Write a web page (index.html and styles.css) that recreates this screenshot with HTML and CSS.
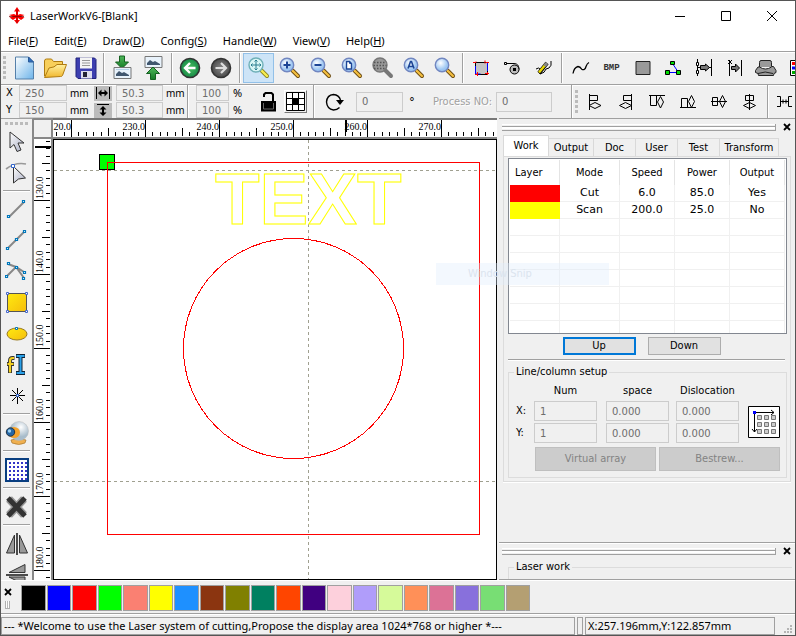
FILE: index.html
```html
<!DOCTYPE html>
<html lang="en">
<head>
<meta charset="utf-8">
<title>LaserWorkV6-[Blank]</title>
<link rel="stylesheet" href="styles.css">
</head>
<body>
<svg class="defs" width="0" height="0" aria-hidden="true">
  <defs>
    <linearGradient id="page" x1="0" y1="0" x2="1" y2="1"><stop offset="0" stop-color="#fff"/><stop offset="1" stop-color="#6db4ea"/></linearGradient>
    <linearGradient id="folder" x1="0" y1="0" x2="0" y2="1"><stop offset="0" stop-color="#fff0a0"/><stop offset="1" stop-color="#f0b62c"/></linearGradient>
    <linearGradient id="green" x1="0" y1="0" x2="0" y2="1"><stop offset="0" stop-color="#4fb85a"/><stop offset="1" stop-color="#157a26"/></linearGradient>
    <radialGradient id="greenball"><stop offset="0" stop-color="#4cc060"/><stop offset="1" stop-color="#178a48"/></radialGradient>
    <radialGradient id="greyball"><stop offset="0" stop-color="#888"/><stop offset="1" stop-color="#4a4a4a"/></radialGradient>
    <radialGradient id="glass" cx=".4" cy=".35"><stop offset="0" stop-color="#fff"/><stop offset="1" stop-color="#9cc6f2"/></radialGradient>
    <linearGradient id="gold" x1="0" y1="0" x2="1" y2="1"><stop offset="0" stop-color="#ffea10"/><stop offset="1" stop-color="#f5bd0c"/></linearGradient>
    <linearGradient id="cursor" x1="0" y1="0" x2="1" y2="1"><stop offset="0" stop-color="#fff"/><stop offset="1" stop-color="#a9aec4"/></linearGradient>
    <radialGradient id="globe" cx=".6" cy=".3"><stop offset="0" stop-color="#fff"/><stop offset="1" stop-color="#a8bccb"/></radialGradient>
    <symbol id="lens" viewBox="0 0 24 24">
      <path d="M14.500 14.500 20 20" stroke="#6a4a10" stroke-width="4" stroke-linecap="round"/>
      <path d="M14.500 14.500 20 20" stroke="#f5c040" stroke-width="2.200" stroke-linecap="round"/>
      <circle cx="9" cy="9" r="6.700" fill="url(#glass)" stroke="#7186c0" stroke-width="1.400"/>
    </symbol>
    <pattern id="ticks-x" x="18" y="0" width="74" height="17" patternUnits="userSpaceOnUse">
      <path d="M.5 0v17M37.500 8v8M7.500 12v4M15.500 12v4M22.500 12v4M30.500 12v4M44.500 12v4M52.500 12v4M59.500 12v4M67.500 12v4" stroke="#000"/>
    </pattern>
    <pattern id="ticks-y" x="0" y="61" width="17" height="74" patternUnits="userSpaceOnUse">
      <path d="M0 .5h16M8 37.500h8M12 7.500h4M12 15.500h4M12 22.500h4M12 30.500h4M12 44.500h4M12 52.500h4M12 59.500h4M12 67.500h4" stroke="#000"/>
    </pattern>
  </defs>
</svg>
<div class="window">
  <header class="titlebar">
    <svg class="logo" width="18" height="18" viewBox="0 0 18 18"><path d="M9 0 12 4.500H10V8l2-1 4.500 1-3.500 1.500 3.500 1L13 13l-3-2v2h2l-3 4-3-4h2v-2l-3 2-3.500-2.500L5 9.500 1 8l5-1 2 1V4.500H6z" fill="#f00"/><path d="M1 9.500h15" stroke="#600" stroke-width=".7"/><path d="M9 2v14" stroke="#900" stroke-width=".7"/></svg>
    <span class="title">LaserWorkV6-[Blank]</span>
    <button class="winbtn" aria-label="Minimize"><svg width="10" height="10"><path d="M0 5.500h10" stroke="#000"/></svg></button>
    <button class="winbtn" aria-label="Maximize"><svg width="10" height="10"><path d="M.5 .5h9v9h-9z" fill="none" stroke="#000"/></svg></button>
    <button class="winbtn" aria-label="Close"><svg width="10" height="10"><path d="M0 0 10 10M10 0 0 10" stroke="#000"/></svg></button>
  </header>
  <nav class="menu">
    <a href="#">File(<u>F</u>)</a><a href="#">Edit(<u>E</u>)</a><a href="#">Draw(<u>D</u>)</a><a href="#">Config(<u>S</u>)</a><a href="#">Handle(<u>W</u>)</a><a href="#">View(<u>V</u>)</a><a href="#">Help(<u>H</u>)</a>
  </nav>

  <div class="toolbar main-tools">
    <i class="grip"></i>
    <button aria-label="New"><svg width="24" height="24"><path d="M3.500 1h13l5 5v17h-18z" fill="url(#page)" stroke="#5580aa"/><path d="M16.500 1v5h5z" fill="#2f6fc0" stroke="#2a5a98"/></svg></button>
    <button aria-label="Open"><svg width="24" height="24"><path d="M1.500 20V5q0-2 2-2h5l2 2.500h9v3" fill="#f8cf5a" stroke="#b07c10"/><path d="M1.500 21.500 6 12q6-.5 8-3.500h9.500l-4 11q-.5 1-2 1z" fill="url(#folder)" stroke="#b07c10"/></svg></button>
    <button aria-label="Save"><svg width="24" height="24"><path d="M2 2h18.500l1.500 1.500v19H4l-2-2z" fill="#3d3fb0" stroke="#23247c"/><path d="M6 1.500h12v11H6z" fill="#f4f4f4"/><path d="M8 4.500h8M8 7h8M8 9.500h8" stroke="#999"/><path d="M7 15h11v7.500H7z" fill="#dde"/><path d="M9 16h4v5H9z" fill="#223"/></svg></button>
    <i class="sep"></i>
    <button aria-label="Import"><svg width="24" height="26"><path d="M8.500 1h5v6h4L11 13.500 4.500 7h4z" fill="url(#green)" stroke="#146020"/><path d="M3 12.500h17v11H3z" fill="#e8f2fb" stroke="#777"/><path d="M5 21v-2l3-3 3 2 2-1 5 3v1z" fill="#40566e"/><path d="M5 14.500h13" stroke="#b6d2ea"/></svg></button>
    <button aria-label="Export"><svg width="24" height="26"><path d="M3 1.500h17v11H3z" fill="#e8f2fb" stroke="#777"/><path d="M5 10V8l3-3 3 2 2-1 5 3v1z" fill="#40566e"/><path d="M8.500 24.500h5v-6h4L11 12l-6.500 6.500h4z" fill="url(#green)" stroke="#146020"/></svg></button>
    <i class="sep"></i>
    <button aria-label="Undo"><svg width="24" height="24"><circle cx="11" cy="12" r="9.500" fill="url(#greenball)" stroke="#333" stroke-width="1.600"/><path d="M16.500 12H7M11 7l-5 5 5 5" fill="none" stroke="#fff" stroke-width="2.400"/></svg></button>
    <button aria-label="Redo"><svg width="24" height="24"><circle cx="11" cy="12" r="9.500" fill="url(#greyball)" stroke="#333" stroke-width="1.600"/><path d="M5.500 12H15M11 7l5 5-5 5" fill="none" stroke="#ddd" stroke-width="2.200"/></svg></button>
    <i class="sep"></i>
    <button class="active" aria-label="Pan view"><svg width="24" height="24"><path d="M14.500 14.500 20 20" stroke="#8a8420" stroke-width="4" stroke-linecap="round"/><path d="M14.500 14.500 20 20" stroke="#f7ee50" stroke-width="2.400" stroke-linecap="round"/><circle cx="9" cy="9" r="7" fill="#d9f6f6" stroke="#6fb0b8" stroke-width="1.400"/><path d="M9 4v10M4 9h10M7.500 5.500 9 4l1.500 1.500M7.500 12.500 9 14l1.500-1.500M5.500 7.500 4 9l1.500 1.500M12.500 7.500 14 9l-1.500 1.500" fill="none" stroke="#2b7f90"/></svg></button>
    <button aria-label="Zoom in"><svg width="24" height="24"><use href="#lens"/><path d="M9 5.500v7M5.500 9h7" stroke="#1c4596" stroke-width="2"/></svg></button>
    <button aria-label="Zoom out"><svg width="24" height="24"><use href="#lens"/><path d="M5.500 9h7" stroke="#1c4596" stroke-width="2"/></svg></button>
    <button aria-label="View page"><svg width="24" height="24"><use href="#lens"/><path d="M6.500 5.500h3l2 2v5.500h-5z" fill="#fff" stroke="#1c4596" stroke-width="1.400"/><path d="M9.500 5.500v2h2" fill="none" stroke="#1c4596"/></svg></button>
    <button aria-label="View data"><svg width="24" height="24"><path d="M14.500 14.500 20 20" stroke="#777" stroke-width="4" stroke-linecap="round"/><circle cx="9" cy="9" r="7" fill="#999" stroke="#777" stroke-width="1.400"/><path d="M3 6.500h12M2.500 9.500h13M3 12.500h12" stroke="#555" stroke-width="1.400" stroke-dasharray="1.500 1.500"/></svg></button>
    <button aria-label="View all"><svg width="24" height="24"><use href="#lens"/><path d="M6 12.500 8.500 5.500h1L12 12.500M7 10.500h4" fill="none" stroke="#1c4596" stroke-width="1.600"/></svg></button>
    <button aria-label="View selection"><svg width="24" height="24"><use href="#lens"/></svg></button>
    <i class="sep"></i>
    <button aria-label="Track frame"><svg width="20" height="18"><path d="M3.500 3.500h12v12h-12z" fill="#c4c4c4" stroke="#000"/><path d="M3.500 7v8h5M15.500 4v8" stroke="#00f" fill="none"/><path d="M1 3.500h3v-1M13 4.500v-3M14 3.500h3M5.500 13v4M3 15.500h3M13 14.500h4M15.500 13v3" stroke="#f00" fill="none"/></svg></button>
    <button aria-label="Laser position"><svg width="20" height="16"><path d="M1.500 2.500h2v2h-2zM4 3.500h7q5 0 5 6" fill="none" stroke="#000"/><circle cx="11.500" cy="9.500" r="4.500" fill="#bbb" stroke="#000"/><path d="M10 8h3v3h-3z"/></svg></button>
    <button aria-label="Cut preview"><svg width="18" height="18"><path d="M1 10q3-2 4 0-2 4 0 5 5-1 6-5l3-1q3-2 2-7" fill="none" stroke="#000"/><path d="M4 14 12 4" stroke="#000" stroke-width="4"/><path d="M4 13.500 11 5" stroke="#e8d800" stroke-width="2.400"/><path d="M9.500 7 12 4" stroke="#888" stroke-width="3"/></svg></button>
    <i class="sep"></i>
    <button aria-label="Smooth curve"><svg width="18" height="14"><path d="M1 12.500q1-6 5-7 2 0 4 3 3 1 4-3 1-3 3-4" fill="none" stroke="#000" stroke-width="1.300"/></svg></button>
    <button class="bmp">BMP</button>
    <button aria-label="Fill"><svg width="16" height="16"><path d="M1 1.500h14v13H1z" fill="#999" stroke="#222"/></svg></button>
    <button aria-label="Nodes"><svg width="18" height="14"><path d="M2.500 11.500h11L7.500 2.500" fill="none" stroke="#00f"/><path d="M5.500.5h4v3h-4zM.5 9.500h4v4h-4zM11.500 9.500h4v4h-4z" fill="#0d0" stroke="#000"/></svg></button>
    <button aria-label="Bridge"><svg width="20" height="18"><path d="M2.500 0v17M16.500 0v17" stroke="#000"/><path d="M1.500 3.500h2v3h-2zM1.500 11.500h2v3h-2z" fill="#fff" stroke="#000"/><path d="M3 8.500h3M5.500 6.500h5V5l4 3.500-4 3.500v-1.500h-5zM14 8.500h2" stroke="#000" fill="#777"/></svg></button>
    <button aria-label="Offset"><svg width="18" height="18"><path d="M2.500 1v16M14.500 1v16M1 1l4 4M5 1 1 5" stroke="#000"/><path d="M4.500 7.500h4V5l4 4-4 4v-2.500h-4z" fill="#777" stroke="#000"/></svg></button>
    <button aria-label="Material"><svg width="24" height="18"><path d="M6 1.500h9q1.500 0 1.500 2v4h2l2.500 4v2l-2 1-.5 2H3.500L3 14.500l-2.500-1v-2L3 8h1.500V3.500q0-2 1.500-2zM3 14.500q7-3 15 0M4.500 8q6 4 12 0" fill="#999" stroke="#222"/></svg></button>
    <button aria-label="Layers"><svg width="18" height="18"><path d="M1.500 1.500h15v15h-15z" fill="#fff" stroke="#000"/><path d="M3 3h3v3H3z" fill="#f00"/><path d="M3 7.500h3v3H3z" fill="#00f"/><path d="M3 12h3v3H3z" fill="#0a0"/><path d="M8 4.500h7M8 9h7M8 13.500h7" stroke="#000"/></svg></button>
  </div>

  <div class="toolbar props">
    <div class="fields position">
      <label for="px">X</label><input id="px" value="250" disabled><span>mm</span>
      <button class="lockdim" aria-label="Width"><svg width="14" height="12"><path d="M.5 0v12M13.500 0v12" stroke="#000"/><path d="M2 6 5.500 2.500V5h3V2.500L12 6 8.500 9.500V7h-3v2.500z"/></svg></button>
      <input aria-label="Width" value="50.3" disabled><span>mm</span>
      <label for="py">Y</label><input id="py" value="150" disabled><span>mm</span>
      <button class="lockdim" aria-label="Height"><svg width="14" height="13"><path d="M1 .5h12" stroke="#000"/><path d="M7 2l3.500 3.500H8v3h2.500L7 12 3.500 8.500H6v-3H3.500z"/></svg></button>
      <input aria-label="Height" value="50.3" disabled><span>mm</span>
    </div>
    <i class="sep tall"></i>
    <div class="fields scale">
      <input aria-label="Scale X" value="100" disabled><span>%</span>
      <input aria-label="Scale Y" value="100" disabled><span>%</span>
    </div>
    <button class="padlock" aria-label="Lock ratio"><svg width="18" height="22"><path d="M4 6V3.500L5.500 2h6L13 3.500V10" fill="none" stroke="#000" stroke-width="2"/><path d="M1 10h15v10.500H1z"/><path d="M3.500 12v6h10v-6" fill="none" stroke="#666"/></svg></button>
    <button class="anchor" aria-label="Anchor"><svg width="19" height="19"><path d="M.5.5h18v18H.5zM6.500 0v19M12.500 0v19M0 6.500h19M0 12.500h19" fill="#fff" stroke="#000"/><path d="M7 7h5v5H7z"/></svg></button>
    <i class="sep tall"></i>
    <svg class="rotate" width="20" height="18"><path d="M14.500 14.500Q12 17 8.500 17 2 16 1.500 9 2 2 8.500 1.500 14 2 15.500 7" fill="none" stroke="#000" stroke-width="1.400"/><path d="M11 7h8l-4 5z"/></svg>
    <input class="angle" aria-label="Angle" value="0" disabled><span class="degree">°</span>
    <label class="dim" for="proc">Process NO:</label><input class="proc" id="proc" value="0" disabled>
    <i class="sep tall end"></i>
    <i class="grip"></i>
    <button aria-label="Align left"><svg width="16" height="16"><path d="M2.500 0v16M2.500 1.500h8v5h-8zM2 11.500 8 8.500l6 3-6 3z" fill="none" stroke="#000"/></svg></button>
    <button aria-label="Align right"><svg width="16" height="16"><path d="M13.500 0v16M5.500 1.500h8v5h-8zM1.500 11.500l6-3 6 3-6 3z" fill="none" stroke="#000"/></svg></button>
    <button aria-label="Align top"><svg width="16" height="16"><path d="M0 1.500h16M1.500 1.500h6v10h-6zM11.500 2.500l3 5.500-3 6-3-6z" fill="none" stroke="#000"/></svg></button>
    <button aria-label="Align bottom"><svg width="16" height="16"><path d="M0 13.500h16M1.500 4.500h6v9h-6zM11.500 1.500l3 6-3 6-3-6z" fill="none" stroke="#000"/></svg></button>
    <button aria-label="Center horizontally"><svg width="16" height="16"><path d="M0 7.500h16M1.500 3.500h5v8h-5zM11.500 1.500l3 6-3 6-3-6z" fill="none" stroke="#000"/></svg></button>
    <button aria-label="Center vertically"><svg width="16" height="16"><path d="M7.500 0v16M3.500 1.500h8v5h-8zM1.500 11.500l6-3 6 3-6 3z" fill="none" stroke="#000"/></svg></button>
    <i class="sep tall"></i>
    <button aria-label="Equal spacing"><svg width="20" height="12"><path d="M0 .5h3.500v10H0M4 5.500h7M6 3.500v4M9 3.500v4M15 .5h-3.500v10H15" fill="none" stroke="#000"/></svg></button>
  </div>

  <main class="body">
    <aside class="toolbox">
      <i class="grip flat"></i>
      <button aria-label="Select"><svg width="24" height="24"><path d="M5 2v16l4-3.500 3 7 4-1.500-3-7h6z" fill="url(#cursor)" stroke="#333"/></svg></button>
      <button aria-label="Edit nodes"><svg width="24" height="24"><path d="M1 8Q10 1 21 3" fill="none" stroke="#999" stroke-width="1.600"/><path d="M8.500 5.500V22l5-4 7-1z" fill="url(#cursor)" stroke="#333"/><path d="M6.500 3.500h3v3h-3z" fill="#fff" stroke="#36c"/></svg></button>
      <i class="sep"></i>
      <button aria-label="Line"><svg width="24" height="24"><path d="M4 19 19 4" stroke="#888" stroke-width="2"/><path d="M2.500 17.500h2v2h-2zM17.500 2.500h2v2h-2z" fill="#fff" stroke="#07b" stroke-width="1.200"/></svg></button>
      <button aria-label="Polyline"><svg width="24" height="24"><path d="M3 19 19 3" stroke="#888" stroke-width="2"/><path d="M1.500 18.500h2v2h-2zM10.500 9.500h2v2h-2zM18.500 1.500h2v2h-2z" fill="#fff" stroke="#07b" stroke-width="1.200"/></svg></button>
      <button aria-label="Curve"><svg width="24" height="24"><path d="M2 16 11 7l8 11M3 4l8 3 8 5" fill="none" stroke="#888" stroke-width="2"/><path d="M.5 15.500h2v2h-2zM2.500 2.500h2v2h-2zM10.500 6.500h2v2h-2zM18.500 11.500h2v2h-2zM17.500 17.500h2v2h-2z" fill="#fff" stroke="#07b" stroke-width="1.200"/></svg></button>
      <button aria-label="Rectangle"><svg width="24" height="24"><path d="M2.500 2.500h19v18h-19z" fill="url(#gold)" stroke="#555"/><path d="M1.500 1.500h2v2h-2zM20.500 1.500h2v2h-2zM1.500 19.500h2v2h-2zM20.500 19.500h2v2h-2z" fill="#fff" stroke="#46c"/></svg></button>
      <button aria-label="Ellipse"><svg width="24" height="24"><ellipse cx="12" cy="12" rx="10" ry="6" fill="url(#gold)" stroke="#997a20"/><path d="M10.500 5.500h2v2h-2z" fill="#fff" stroke="#07b"/></svg></button>
      <button aria-label="Text"><svg width="24" height="24"><path d="M9.500 5H7.500Q5 5 5 8v12M2 11h7" fill="none" stroke="#333" stroke-width="4"/><path d="M9 5H7.500Q5 5 5 8v11.500M2.500 11h6" fill="none" stroke="#f4d020" stroke-width="2.200"/><path d="M11 3h9M15.500 3v17M11 20h9" stroke="#123" stroke-width="4"/><path d="M11.500 3h8M15.500 3v17M11.500 20h8" stroke="#2aa0e8" stroke-width="2"/></svg></button>
      <button aria-label="Point"><svg width="24" height="24"><path d="M12.500 4v16M5 11.500h15M7 6l11 11M18 6 7 17" stroke="#000"/><path d="M11.500 10.500h2v2h-2z" fill="#fff" stroke="#36c"/></svg></button>
      <i class="sep"></i>
      <button aria-label="Camera"><svg width="26" height="26"><path d="M7 20q7-3 15 0l-1 3q-6 3-13 0z" fill="#f0b050" stroke="#a87830" stroke-width=".7"/><ellipse cx="15" cy="11" rx="9.500" ry="9.500" fill="url(#globe)" stroke="#b8b8b8" stroke-width=".5"/><ellipse cx="10" cy="12.500" rx="6" ry="5.500" fill="#f5a32c"/><circle cx="6.500" cy="12" r="4.200" fill="#2566a4" stroke="#234"/><circle cx="5.500" cy="11" r="1.700" fill="#9cd0f0"/></svg></button>
      <i class="sep"></i>
      <button aria-label="Array"><svg width="26" height="26"><defs><pattern id="dots" x="4" y="4" width="4" height="4" patternUnits="userSpaceOnUse"><path d="M1 1h2v2H1z" fill="#3434c8"/></pattern></defs><path d="M2 2h22v22H2z" fill="#fff" stroke="#093e80" stroke-width="2"/><path d="M4 4h19v19H4z" fill="url(#dots)"/></svg></button>
      <i class="sep"></i>
      <button aria-label="Delete"><svg width="26" height="26"><path d="M5 5l15 16M20 5 5 21" stroke="#999" stroke-width="8"/><path d="M4 4 21 22M21 4 4 22" stroke="#333" stroke-width="5"/></svg></button>
      <i class="sep"></i>
      <button aria-label="Mirror horizontal"><svg width="24" height="24"><path d="M9.500 3v18h-8zM14.500 3v18h8z" fill="#999" stroke="#333"/><path d="M12 1v22" stroke="#222" stroke-width="1.600"/></svg></button>
      <button aria-label="Mirror vertical"><svg width="24" height="24"><path d="M20 1.500v8H4zM20 22v-8H4z" fill="#999" stroke="#333"/><path d="M1 12h22" stroke="#222" stroke-width="1.600"/></svg></button>
    </aside>

    <section class="workspace">
      <div class="corner"></div>
      <div class="ruler-x"><svg width="100%" height="100%">
        <rect width="100%" height="17" fill="url(#ticks-x)"/>
        <g text-anchor="end"><text x="18" y="10">20.0</text><text x="92" y="10">230.0</text><text x="166" y="10">240.0</text><text x="240" y="10">250.0</text><text x="314" y="10">260.0</text><text x="388" y="10">270.0</text></g>
        <path d="M293 0v12" stroke="#000" stroke-width="2"/>
      </svg></div>
      <div class="ruler-y"><svg width="100%" height="100%">
        <rect width="17" height="100%" fill="url(#ticks-y)"/>
        <text transform="translate(9 60) rotate(-90)">130.0</text><text transform="translate(9 134) rotate(-90)">140.0</text><text transform="translate(9 208) rotate(-90)">150.0</text><text transform="translate(9 282) rotate(-90)">160.0</text><text transform="translate(9 356) rotate(-90)">170.0</text><text transform="translate(9 430) rotate(-90)">180.0</text>
        <path d="M1 8h16" stroke="#000" stroke-width="2"/>
      </svg></div>
      <div class="canvas"><svg width="100%" height="100%" shape-rendering="crispEdges">
        <path d="M0 30.500h2000M0 341.500h2000M254.500 0v2000" stroke="#a0a090" stroke-dasharray="3 3"/>
        <rect x="45.500" y="14.500" width="15" height="15" fill="#0f0" stroke="#000"/>
        <rect x="53.500" y="22.500" width="372" height="372" fill="none" stroke="#f00"/>
        <circle cx="239.500" cy="208.500" r="110" fill="none" stroke="#f00"/>
        <text class="shape-text" x="161" y="84">TEXT</text>
      </svg></div>
    </section>

    <aside class="panel">
      <div class="dock work-dock">
        <div class="dock-head"><i class="bar"></i><button class="close" aria-label="Close panel"><svg width="8" height="8"><path d="M1 1l6 6M7 1 1 7" stroke="#000" stroke-width="1.800"/></svg></button></div>
        <div class="tabs">
          <button class="on">Work</button><button>Output</button><button>Doc</button><button>User</button><button>Test</button><button>Transform</button>
        </div>
        <div class="tabpage">
          <div class="list">
            <table>
              <thead><tr><th>Layer</th><th>Mode</th><th>Speed</th><th>Power</th><th>Output</th></tr></thead>
              <tbody>
                <tr><td class="red"></td><td>Cut</td><td>6.0</td><td>85.0</td><td>Yes</td></tr>
                <tr><td class="yellow"></td><td>Scan</td><td>200.0</td><td>25.0</td><td>No</td></tr>
                <tr><td></td><td></td><td></td><td></td><td></td></tr>
                <tr><td></td><td></td><td></td><td></td><td></td></tr>
                <tr><td></td><td></td><td></td><td></td><td></td></tr>
                <tr><td></td><td></td><td></td><td></td><td></td></tr>
                <tr><td></td><td></td><td></td><td></td><td></td></tr>
                <tr><td></td><td></td><td></td><td></td><td></td></tr>
                <tr><td></td><td></td><td></td><td></td><td></td></tr>
              </tbody>
            </table>
          </div>
          <div class="order"><button class="default">Up</button><button>Down</button></div>
          <hr>
          <fieldset class="setup">
            <legend>Line/column setup</legend>
            <div class="setup-grid">
              <span></span><span>Num</span><span>space</span><span>Dislocation</span><span></span>
              <label for="nx">X:</label><input id="nx" value="1" disabled><input aria-label="X space" value="0.000" disabled><input aria-label="X dislocation" value="0.000" disabled>
              <button class="dir" aria-label="Array direction"><svg width="32" height="32"><path d="M.5.5h31v31H.5z" fill="#fff" stroke="#000"/><path d="M7 6.500h19M23 4l3 2.500-3 2.500M6.500 7v19M4 23l2.500 3L9 23" fill="none" stroke="#000"/><path d="M5 5h3v3H5z" fill="#00f"/><path d="M9.500 9.500h4v4h-4zM16.500 9.500h4v4h-4zM23.500 9.500h4v4h-4zM9.500 16.500h4v4h-4zM16.500 16.500h4v4h-4zM23.500 16.500h4v4h-4zM9.500 23.500h4v4h-4zM16.500 23.500h4v4h-4zM23.500 23.500h4v4h-4z" fill="#ccc" stroke="#777"/></svg></button>
              <label for="ny">Y:</label><input id="ny" value="1" disabled><input aria-label="Y space" value="0.000" disabled><input aria-label="Y dislocation" value="0.000" disabled>
            </div>
            <div class="setup-actions"><button disabled>Virtual array</button><button disabled>Bestrew...</button></div>
          </fieldset>
        </div>
      </div>
      <div class="dock laser-dock">
        <div class="dock-head"><i class="bar"></i><button class="close" aria-label="Close laser work"><svg width="8" height="8"><path d="M1 1l6 6M7 1 1 7" stroke="#000" stroke-width="1.800"/></svg></button></div>
        <fieldset class="laser"><legend>Laser work</legend></fieldset>
      </div>
    </aside>
    <div class="ghost">Window Snip</div>
  </main>

  <div class="palette">
    <div class="palette-head"><button class="close" aria-label="Close palette"><svg width="8" height="8"><path d="M1 1l6 6M7 1 1 7" stroke="#000" stroke-width="1.800"/></svg></button><i class="vbar"></i></div>
    <div class="swatches">
      <button class="c1" aria-label="Black"></button><button class="c2" aria-label="Blue"></button><button class="c3" aria-label="Red"></button><button class="c4" aria-label="Green"></button><button class="c5" aria-label="Salmon"></button><button class="c6" aria-label="Yellow"></button><button class="c7" aria-label="Sky"></button><button class="c8" aria-label="Brown"></button><button class="c9" aria-label="Olive"></button><button class="c10" aria-label="Teal"></button><button class="c11" aria-label="Orange"></button><button class="c12" aria-label="Indigo"></button><button class="c13" aria-label="Pink"></button><button class="c14" aria-label="Lavender"></button><button class="c15" aria-label="Lime"></button><button class="c16" aria-label="Coral"></button><button class="c17" aria-label="Rose"></button><button class="c18" aria-label="Purple"></button><button class="c19" aria-label="Light green"></button><button class="c20" aria-label="Tan"></button>
    </div>
  </div>
  <footer class="status">
    <span class="pane message">--- *Welcome to use the Laser system of cutting,Propose the display area 1024*768 or higher *---</span>
    <span class="pane slim"></span>
    <span class="pane coords">X:257.196mm,Y:122.857mm</span>
    <svg class="sizer" width="10" height="10"><path d="M6 0h2v2H6zM3 3h2v2H3zM6 3h2v2H6zM0 6h2v2H0zM3 6h2v2H3zM6 6h2v2H6z" fill="#b4b4b4"/></svg>
  </footer>
</div>
</body>
</html>
```

FILE: styles.css
```css
* { box-sizing: border-box; }
body { margin: 0; font: 11px/16px "DejaVu Sans Condensed", "Noto Sans", sans-serif; color: #000; }
button, input { font: inherit; color: inherit; margin: 0; padding: 0; border: 0; border-radius: 0; background: none; }
button { display: flex; align-items: center; justify-content: center; }
svg { display: block; fill: #000; flex: none; }
fieldset { margin: 0; min-width: 0; }
.defs { position: absolute; }

.window { display: flex; flex-direction: column; height: 100vh; overflow: hidden; border: 1px solid #555; background: #f0f0f0; }
.titlebar { display: flex; align-items: center; height: 30px; padding-left: 7px; background: #fff; flex: none; }
.title { flex: 1; margin-left: 4px; font-family: "Noto Sans", sans-serif; }
.winbtn { width: 46px; height: 28px; }
.menu { display: flex; gap: 16px; height: 20px; padding-left: 7px; align-items: center; background: #fff; flex: none; }
.menu a { color: inherit; text-decoration: none; font-family: "Noto Sans", sans-serif; }

.toolbar { display: flex; align-items: center; border-top: 1px solid #a0a0a0; box-shadow: inset 0 1px #fff; overflow: hidden; flex: none; }
.toolbar > * { flex: none; }
.main-tools { height: 33px; }
.main-tools > button { width: 31px; height: 30px; }
.main-tools > .active { background: #cde4f7; border: 1px solid #92c0e8; }
.main-tools .bmp { font: bold 9px "Liberation Mono", monospace; color: #333; }
.grip { width: 3px; height: 24px; margin: 0 2px; background: repeating-linear-gradient(#bbb 0 3px, transparent 3px 5px); }
.grip.flat { width: 24px; height: 3px; margin: 3px 0 1px; background: repeating-linear-gradient(90deg, #bbb 0 3px, transparent 3px 5px); }
.sep { width: 2px; height: 30px; margin: 0 2px; background: #a0a0a0; border-right: 1px solid #fff; }

.props { height: 34px; }
.props > button { width: 31px; height: 30px; }
.props > .grip { margin: 0 1px 0 0; }
.sep.tall { height: 34px; }
.fields { display: grid; grid-auto-rows: 16px; row-gap: 1px; align-items: center; line-height: 14px; font-family: "DejaVu Sans", sans-serif; font-size: 10px; padding-left: 5px; }
.position { grid-template-columns: 13px 48px 23px 26px 47px 22px; }
.scale { grid-template-columns: 33px 24px; }
.fields > span { padding-left: 3px; font-family: "Noto Sans", sans-serif; }
.scale > span { padding-left: 4px; font-size: 11px; }
input:disabled { border: 1px solid #ccc; background: #f0f0f0; color: #6d6d6d; padding: 0 5px; width: 100%; height: 100%; font-family: "DejaVu Sans", sans-serif; font-size: 10px; }
.props .lockdim { width: 18px; height: 15px; background: #bcbcbc; justify-self: center; }
.props .padlock { width: 18px; margin-left: 7px; }
.props .anchor { width: 23px; height: 23px; margin: 0 4px 0 6px; border: 1px solid; border-color: #fff #777 #777 #fff; }
.rotate { margin-left: 8px; }
.toolbar > input.angle { width: 47px; height: 20px; margin-left: 11px; }
.degree { width: 22px; margin-left: 6px; font-size: 13px; }
.dim { width: 63px; color: #a0a0a0; text-shadow: 1px 1px #fff; margin-left: 2px; }
.toolbar > input.proc { width: 56px; height: 20px; }
.sep.end { margin-left: 19px; }

.body { position: relative; display: flex; flex: 1; min-height: 0; }
.toolbox { display: flex; flex-direction: column; align-items: center; width: 32px; overflow: hidden; border-top: 1px solid #a0a0a0; border-right: 1px solid #888; }
.toolbox > * { flex: none; }
.toolbox > button { width: 30px; height: 31px; }
.toolbox > .sep { width: 27px; height: 2px; margin: 2px 0; border: 0; border-bottom: 1px solid #fff; }

.workspace { display: grid; grid-template: 21px 1fr / 20px 1fr; flex: 1; min-width: 0; }
.corner, .ruler-x, .ruler-y { overflow: hidden; border: 0 solid #888; }
.corner { background: #f0f0f0; border-width: 2px 2px 2px 1px; }
.ruler-x { background: #fff; border-width: 2px 0; border-top-color: #777; }
.ruler-y { background: #fff; border-width: 0 2px 0 1px; }
.workspace text { font: 10px "Liberation Serif", serif; fill: #000; }
.canvas { min-height: 0; min-width: 0; border: 1px solid #000; background: #fff; overflow: hidden; }
.workspace .shape-text { font: bold 73px "Liberation Sans", sans-serif; fill: none; stroke: #ff0; }

.panel { display: flex; flex-direction: column; justify-content: space-between; flex: 0 0 295px; margin-left: 2px; border-bottom: 1px solid #a0a0a0; border-top: 1px solid #a0a0a0; }
.dock-head { display: flex; align-items: center; gap: 6px; height: 16px; padding-left: 3px; }
.bar { flex: 1; height: 7px; border: solid #a0a0a0; border-width: 0 1px 1px 0; background: linear-gradient(#fff 1px, transparent 1px 2px, #a0a0a0 2px 3px, #fff 3px 5px, transparent 5px); }
.close { width: 10px; height: 10px; margin-right: 3px; }
.tabs { display: flex; align-items: flex-end; height: 21px; padding-left: 4px; }
.tabs button { width: 42px; height: 18px; border: 1px solid #d9d9d9; border-width: 1px 1px 0 0; }
.tabs .on { width: 46px; height: 21px; background: #fff; border-left-width: 1px; }
.tabs button:nth-child(2) { width: 45px; }
.tabs button:last-child { width: 59px; }
.tabpage { margin: 0 4px; padding: 2px 3px 3px 4px; border: 1px solid #dcdcdc; border-width: 0 1px 1px; box-shadow: inset 0 1px #dcdcdc, 0 1px #fff; }
.list { height: 176px; border: 1px solid #828790; background: #fff; padding: 1px; overflow: hidden; }
table { width: 100%; border-collapse: separate; border-spacing: 0; table-layout: fixed; }
th { height: 25px; font-weight: normal; padding: 1px 0 0; border-right: 1px solid #e4e4e4; }
th:first-child { width: 50px; text-align: left; padding-left: 5px; }
th:nth-child(2) { width: 60px; }
th:nth-child(3), th:nth-child(4) { width: 55px; }
td { height: 17px; padding: 0; text-align: center; font: 11px/16px "DejaVu Sans", sans-serif; border: 1px solid #f0f0f0; border-width: 0 1px 1px 0; }
.red { background: #f00; border-color: #f00; }
.yellow { background: #ff0; border-color: #ff0; }
.order { display: flex; justify-content: center; gap: 12px; margin-right: 12px; padding-top: 3px; }
.order button { width: 73px; height: 18px; border: 1px solid #adadad; background: #e1e1e1; }
.order .default { border: 2px solid #0078d7; }
hr { margin: 4px 2px 3px 0; border: 0; height: 2px; background: #a0a0a0; border-bottom: 1px solid #fff; }
.setup { border: 1px solid #dcdcdc; padding: 2px 6px 6px 7px; }
legend { padding: 0 2px; margin-left: 5px; }
.setup legend { margin-left: -2px; }
.setup-grid { display: grid; grid-template-columns: 18px 63px 9px 63px 7px 63px 9px 32px; grid-template-rows: 17px 20px 20px; row-gap: 2px; align-items: center; }
.setup-grid > span { text-align: center; }
.setup-grid > :nth-child(2), .setup-grid > :nth-child(7), .setup-grid > :nth-child(12) { grid-column: 2; }
.setup-grid > :nth-child(3), .setup-grid > :nth-child(8), .setup-grid > :nth-child(13) { grid-column: 4; }
.setup-grid > :nth-child(4), .setup-grid > :nth-child(9), .setup-grid > :nth-child(14) { grid-column: 6; }
.setup-grid > :nth-child(5) { grid-column: 8; }
.setup-grid > label { grid-column: 1; }
.setup-grid > .dir { grid-column: 8; grid-row: 2 / 4; }
.setup-actions { display: flex; gap: 3px; margin: 4px 0 0 19px; }
.setup-actions button { flex: 1; height: 24px; border: 1px solid #bfbfbf; background: #ccc; color: #838383; }
.laser-dock { height: 37px; overflow: hidden; border-top: 1px solid #a0a0a0; box-shadow: inset 0 1px #fff; }
.laser { height: 40px; margin: 0 3px 0 9px; padding: 0; border: 1px solid #dcdcdc; border-right: 0; }

.ghost { position: absolute; left: 435px; top: 145px; width: 173px; height: 22px; padding-left: 32px; line-height: 22px; background: rgba(225, 238, 252, .4); color: #dbe4ee; }

.palette { display: flex; align-items: center; height: 34px; padding: 2px 0 0 2px; border-bottom: 1px solid #a0a0a0; box-shadow: inset 0 1px #fff; flex: none; }
.palette-head { width: 18px; }
.vbar { display: block; width: 5px; height: 8px; margin: 4px 0 0 2px; border: solid #b0b0b0; border-width: 0 1px 1px; background: linear-gradient(90deg, #fff 1px, #bbb 1px 2px, #fff 2px); }
.swatches { display: grid; grid-template-columns: repeat(20, 1fr); column-gap: 1px; flex: 0 1 509px; }
.swatches button { height: 26px; border: 1px solid #a0a0a0; }
.c1 { background: #000; } .c2 { background: #00f; } .c3 { background: #f00; } .c4 { background: #0f0; }
.c5 { background: #fa8072; } .c6 { background: #ff0; } .c7 { background: #1e90ff; } .c8 { background: #8b3510; }
.c9 { background: #808000; } .c10 { background: #008060; } .c11 { background: #ff4500; } .c12 { background: #400080; }
.c13 { background: #fdd0dc; } .c14 { background: #b09dfa; } .c15 { background: #d6fa9a; } .c16 { background: #ff9058; }
.c17 { background: #dc7296; } .c18 { background: #8870dc; } .c19 { background: #78de74; } .c20 { background: #b49f72; }

.status { display: flex; gap: 2px; height: 21px; padding: 2px 0 0; flex: none; border-top: 1px solid #fff; }
.pane { height: 18px; border: 1px solid #a0a0a0; padding: 0 2px; white-space: nowrap; overflow: hidden; font-family: "Noto Sans", sans-serif; }
.message { flex: 1; }
.slim { width: 6px; }
.coords { width: 190px; }
.sizer { margin: 8px 1px 0 7px; }
```
